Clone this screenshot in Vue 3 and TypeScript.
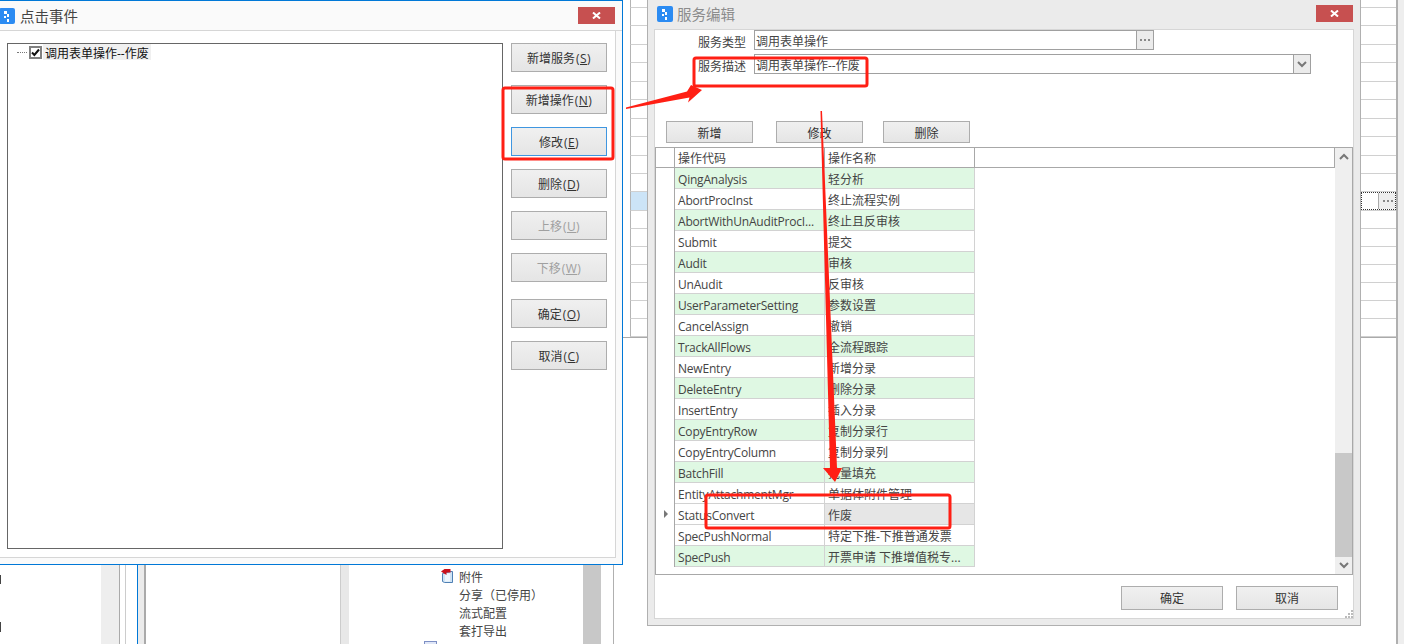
<template>
  <div class="desk">
    <!-- window behind: strips visible around the two dialogs -->
    <div class="back-strip strip-left">
      <div v-for="n in 19" :key="n" class="back-row" :class="{ 'back-sel': n === 12 }"></div>
    </div>
    <div class="back-strip strip-right">
      <div v-for="n in 19" :key="n" class="back-row">
        <div v-if="n === 12" class="back-cell"><span class="back-dots"></span></div>
      </div>
    </div>
    <div class="back-side"></div>

    <div class="back-bottom">
      <div class="tick-col"><i></i><i></i></div>
      <div class="bb-gray"></div>
      <div class="bb-lines"></div>
      <div class="bb-blue"></div>
      <div class="bb-white"></div>
      <div class="bb-split"></div>
      <div class="bb-tree">
        <div class="bb-item">
          <svg class="bb-icon" width="13" height="15" viewBox="0 0 13 15">
            <path d="M1.500 4.500 10 2.500h1.500v11H3.500l-2-1z" fill="#cfe3f5" stroke="#4f80b4" />
            <path d="M4 4.500h5v8H4z" fill="#eef6fd" />
            <path d="M3.500 0h6v3.500H5.500v2.500L0 2.500 3.500 0z" fill="#c8101c" />
          </svg>
          附件
        </div>
        <div class="bb-item">分享（已停用）</div>
        <div class="bb-item">流式配置</div>
        <div class="bb-item">套打导出</div>
        <svg class="bb-icon2" width="13" height="13" viewBox="0 0 13 13">
          <rect x="0.500" y="0.500" width="12" height="12" fill="#dfe6f7" stroke="#7d8fc4" />
        </svg>
      </div>
      <div class="bb-thumb"></div>
      <div class="bb-edge"></div>
    </div>

    <!-- 点击事件 -->
    <section class="win win-event">
      <header class="win-title">
        <svg class="app-icon icon-cut" width="16" height="16" viewBox="0 0 16 16">
          <rect width="16" height="16" rx="2" fill="#2b8bf2" />
          <path d="M5 3h3v3H5zM8 6h2v3H8zM5 8h2v2H5zM8 11h2v3H8z" fill="#fff" />
        </svg>
        <span class="title-text">点击事件</span>
        <button class="close-btn">
          <svg width="9" height="7" viewBox="0 0 9 7"><path d="M1 0.500l7 6M8 0.500l-7 6" stroke="#fff" stroke-width="2" /></svg>
        </button>
      </header>
      <div class="event-body">
        <div class="tree-box">
          <div class="tree-row">
            <span class="tree-dots"></span>
            <span class="check">
              <svg width="9" height="9" viewBox="0 0 9 9"><path d="M1 4.500 3.400 7 8 1.500" fill="none" stroke="#111" stroke-width="2" /></svg>
            </span>
            <span class="tree-label">调用表单操作--作废</span>
          </div>
        </div>
        <div class="side-btns">
          <button
            v-for="b in sideButtons"
            :key="b.text"
            class="btn side-btn"
            :class="{ focus: b.focus, off: b.off, later: b.later }"
          >{{ b.text }}<span class="accel">(<u>{{ b.key }}</u>)</span></button>
        </div>
      </div>
    </section>

    <!-- 服务编辑 -->
    <section class="win win-service">
      <header class="svc-title">
        <svg class="app-icon" width="16" height="16" viewBox="0 0 16 16">
          <rect width="16" height="16" rx="2" fill="#2b8bf2" />
          <path d="M5 3h3v3H5zM8 6h2v3H8zM5 8h2v2H5zM8 11h2v3H8z" fill="#fff" />
        </svg>
        <span class="title-text svc-name">服务编辑</span>
        <button class="close-btn">
          <svg width="9" height="7" viewBox="0 0 9 7"><path d="M1 0.500l7 6M8 0.500l-7 6" stroke="#fff" stroke-width="2" /></svg>
        </button>
      </header>
      <div class="svc-body">
        <div class="form-row">
          <label>服务类型</label>
          <div class="field f-type">
            <span class="f-text">调用表单操作</span>
            <span class="f-btn"><i class="dots"></i></span>
          </div>
        </div>
        <div class="form-row row-desc">
          <label>服务描述</label>
          <div class="field f-desc">
            <span class="f-text">调用表单操作--作废</span>
            <span class="f-btn">
              <svg width="10" height="7" viewBox="0 0 10 7"><path d="M1 1l4 4 4-4" fill="none" stroke="#777" stroke-width="2" /></svg>
            </span>
          </div>
        </div>
        <div class="op-btns">
          <button class="btn op-btn">新增</button>
          <button class="btn op-btn">修改</button>
          <button class="btn op-btn">删除</button>
        </div>
        <div class="grid-wrap">
          <div class="grid-main">
            <div class="g-row g-head">
              <span class="g-mark"></span>
              <span class="g-c1">操作代码</span>
              <span class="g-c2">操作名称</span>
              <span class="g-rest"></span>
            </div>
            <div
              v-for="r in rows"
              :key="r.code"
              class="g-row"
              :class="{ green: r.green, current: r.code === 'StatusConvert' }"
            >
              <span class="g-mark"><i v-if="r.code === 'StatusConvert'" class="cur-arrow"></i></span>
              <span class="g-c1 latin">{{ r.code }}</span>
              <span class="g-c2">{{ r.name }}</span>
            </div>
          </div>
          <div class="scroll">
            <span class="s-arrow">
              <svg width="10" height="7" viewBox="0 0 10 7"><path d="M1 6l4-4 4 4" fill="none" stroke="#777" stroke-width="2" /></svg>
            </span>
            <div class="s-track"><div class="s-thumb"></div></div>
            <span class="s-arrow">
              <svg width="10" height="7" viewBox="0 0 10 7"><path d="M1 1l4 4 4-4" fill="none" stroke="#777" stroke-width="2" /></svg>
            </span>
          </div>
        </div>
        <div class="svc-foot">
          <button class="btn foot-btn">确定</button>
          <button class="btn foot-btn">取消</button>
        </div>
        <span class="grip"></span>
      </div>
    </section>

    <!-- red annotations -->
    <svg class="marks" width="1404" height="644" viewBox="0 0 1404 644">
      <g fill="none" stroke="#ff1f14" stroke-width="3">
        <rect x="503" y="88" width="110" height="71" rx="2" />
        <rect x="694" y="58" width="173" height="28" rx="2" />
        <rect x="706" y="495" width="244" height="33" rx="2" />
      </g>
      <path d="M626 107.500 687 91.500 691 85 702 90 688 102.500 689.500 97.500 626 109z" fill="#ff1f14" />
      <path d="M820.500 111 822 111 837 468 842 468 835 482 823 468 830 468z" fill="#ff1f14" />
    </svg>
  </div>
</template>

<script setup lang="ts">
interface SideButton {
  text: string
  key: string
  focus?: boolean
  off?: boolean
  later?: boolean
}

interface OpRow {
  code: string
  name: string
  green?: boolean
}

const sideButtons: SideButton[] = [
  { text: '新增服务', key: 'S' },
  { text: '新增操作', key: 'N' },
  { text: '修改', key: 'E', focus: true },
  { text: '删除', key: 'D' },
  { text: '上移', key: 'U', off: true },
  { text: '下移', key: 'W', off: true },
  { text: '确定', key: 'O', later: true },
  { text: '取消', key: 'C' }
]

const rows: OpRow[] = [
  { code: 'QingAnalysis', name: '轻分析', green: true },
  { code: 'AbortProcInst', name: '终止流程实例' },
  { code: 'AbortWithUnAuditProcI...', name: '终止且反审核', green: true },
  { code: 'Submit', name: '提交' },
  { code: 'Audit', name: '审核', green: true },
  { code: 'UnAudit', name: '反审核' },
  { code: 'UserParameterSetting', name: '参数设置', green: true },
  { code: 'CancelAssign', name: '撤销' },
  { code: 'TrackAllFlows', name: '全流程跟踪', green: true },
  { code: 'NewEntry', name: '新增分录' },
  { code: 'DeleteEntry', name: '删除分录', green: true },
  { code: 'InsertEntry', name: '插入分录' },
  { code: 'CopyEntryRow', name: '复制分录行', green: true },
  { code: 'CopyEntryColumn', name: '复制分录列' },
  { code: 'BatchFill', name: '批量填充', green: true },
  { code: 'EntityAttachmentMgr', name: '单据体附件管理' },
  { code: 'StatusConvert', name: '作废' },
  { code: 'SpecPushNormal', name: '特定下推-下推普通发票' },
  { code: 'SpecPush', name: '开票申请 下推增值税专...', green: true }
]
</script>

<style>
html,
body {
  margin: 0;
  background: #fff;
  overflow: hidden;
}
</style>

<style scoped>
.desk {
  position: relative;
  width: 1404px;
  height: 644px;
  overflow: hidden;
  background: #fff;
  font-family: "Open Sans", "Noto Sans CJK SC", sans-serif;
  font-size: 12px;
  color: #444;
}

/* background window */
.back-strip {
  position: absolute;
  top: 0;
  height: 338px;
  box-sizing: border-box;
  border-bottom: 1px solid #aaa;
  overflow: hidden;
}
.strip-left {
  left: 623px;
  width: 24px;
  padding-left: 7px;
}
.strip-right {
  left: 1361px;
  width: 35px;
}
.strip-left .back-row {
  border-left: 1px solid #b4b4b4;
}
.back-row {
  height: 18.45px;
  box-sizing: border-box;
  border-bottom: 1px solid #d0d0d0;
}
.back-row:first-child {
  height: 8px;
}
.back-row:nth-child(n + 13) {
  height: 18.1px;
}
.back-sel {
  background: #cce4f7;
}
.back-cell {
  height: 100%;
  box-sizing: border-box;
  border: 1px dotted #333;
  position: relative;
}
.back-dots {
  position: absolute;
  right: 0;
  top: 0;
  bottom: 0;
  width: 17px;
  box-sizing: border-box;
  background: #eee;
  border-left: 1px solid #aaa;
}
.back-dots::after {
  content: '';
  position: absolute;
  left: 4px;
  top: 7px;
  width: 2px;
  height: 2px;
  background: #888;
  box-shadow: 4px 0 #888, 8px 0 #888;
}
.back-side {
  position: absolute;
  left: 1396px;
  top: 0;
  bottom: 0;
  width: 8px;
  box-sizing: border-box;
  border-left: 2px solid #b0b0b0;
  background: #eee;
}
.back-bottom {
  position: absolute;
  left: 0;
  top: 565px;
  width: 647px;
  height: 79px;
  display: flex;
}
.tick-col {
  width: 101px;
  flex: none;
  position: relative;
}
.tick-col i {
  position: absolute;
  left: 0;
  top: 10px;
  width: 1px;
  height: 9px;
  background: #444;
}
.tick-col i + i {
  top: 57px;
  height: 10px;
}
.bb-gray {
  width: 18px;
  flex: none;
  background: #eee;
}
.bb-lines {
  width: 18px;
  flex: none;
  box-sizing: border-box;
  border-left: 1px solid #aaa;
  background: linear-gradient(90deg, #fff 0 5px, #ccc 5px 6px, #fff 6px);
}
.bb-blue {
  width: 9px;
  flex: none;
  box-sizing: border-box;
  border-left: 1px solid #0078d7;
  border-right: 2px solid #aaa;
  background: #ebebeb;
}
.bb-white {
  width: 194px;
  flex: none;
}
.bb-split {
  width: 9px;
  flex: none;
  background: #e8e8e8;
  border-left: 1px solid #ccc;
  box-sizing: border-box;
}
.bb-tree {
  position: relative;
  width: 234px;
  flex: none;
  box-sizing: border-box;
  padding: 4px 0 0 110px;
}
.bb-item {
  height: 18px;
  line-height: 18px;
  white-space: nowrap;
}
.bb-icon {
  position: absolute;
  left: 92px;
  top: 4px;
}
.bb-icon2 {
  position: absolute;
  left: 75px;
  top: 76px;
}
.bb-thumb {
  width: 18px;
  flex: none;
  background: #c8c8c8;
}
.bb-edge {
  margin-left: 12px;
  width: 1px;
  flex: none;
  background: #b0b0b0;
}

/* dialogs */
.win {
  position: absolute;
  box-sizing: border-box;
  display: flex;
  flex-direction: column;
}
.win-event {
  left: -1px;
  top: 0;
  width: 624px;
  height: 565px;
  border: 1px solid #0078d7;
  background: #fafafa;
}
.win-title {
  height: 30px;
  flex: none;
  display: flex;
  align-items: center;
  box-sizing: border-box;
  padding: 0 7px 0 0;
  border-bottom: 1px solid #d6d6d6;
}
.app-icon {
  flex: none;
}
.icon-cut {
  margin-left: -1px;
}
.title-text {
  margin-left: 5px;
  font-size: 14.5px;
  color: #444;
}
.close-btn {
  margin-left: auto;
  width: 37px;
  height: 17px;
  padding: 0;
  border: 0;
  background: #c75050;
  display: flex;
  align-items: center;
  justify-content: center;
}
.event-body {
  flex: 1;
  display: flex;
  margin-right: 6px;
  margin-bottom: 6px;
  padding: 12px 0 8px 7px;
  box-sizing: border-box;
  background: #fff;
  border-right: 1px solid #d6d6d6;
  border-bottom: 1px solid #d6d6d6;
  min-height: 0;
}
.tree-box {
  width: 496px;
  box-sizing: border-box;
  border: 1px solid #666;
}
.tree-row {
  display: flex;
  align-items: center;
  height: 16px;
  padding-left: 9px;
  font-size: 12px;
  color: #111;
}
.tree-dots {
  width: 10px;
  margin-right: 2px;
  border-top: 1px dotted #777;
}
.check {
  width: 13px;
  height: 13px;
  flex: none;
  margin-top: 1px;
  box-sizing: border-box;
  border: 2px solid #808080;
  display: flex;
  align-items: center;
  justify-content: center;
}
.tree-label {
  margin-left: 1px;
  padding: 0 2px;
  height: 16px;
  background: #f0f0f0;
  line-height: 19px;
}
.side-btns {
  margin-left: 8px;
  width: 96px;
  display: flex;
  flex-direction: column;
  gap: 13px;
}
.btn {
  box-sizing: border-box;
  padding: 2px 0 0;
  border: 1px solid #adadad;
  background: linear-gradient(#f0f0f0, #e5e5e5);
  font-family: inherit;
  font-size: 12px;
  color: #333;
}
.accel {
  margin-left: 1px;
  letter-spacing: 0.4px;
}
.side-btn {
  height: 29px;
  flex: none;
  padding-top: 0;
}
.side-btn.focus {
  border-color: #3f96e0;
}
.side-btn.off {
  color: #a0a0a0;
}
.side-btn.later {
  margin-top: 4px;
}

.win-service {
  left: 647px;
  top: 0;
  width: 714px;
  height: 626px;
  border: 1px solid #b0b0b0;
  border-top: 0;
  background: #ebebeb;
}
.svc-title {
  height: 29px;
  flex: none;
  display: flex;
  align-items: center;
  padding: 0 7px 2px 9px;
  box-sizing: border-box;
}
.svc-name {
  color: #8c8c8c;
  margin-left: 4px;
}
.svc-body {
  position: relative;
  flex: 1;
  margin: 0 6px 6px;
  background: #fff;
  border: 1px solid #d6d6d6;
  display: flex;
  flex-direction: column;
  min-height: 0;
}
.form-row {
  display: flex;
  align-items: center;
  height: 20px;
}
.row-desc {
  margin-top: 4px;
}
.form-row label {
  width: 91px;
  flex: none;
  text-align: right;
  margin-right: 8px;
  padding-top: 4px;
}
.field {
  height: 20px;
  box-sizing: border-box;
  border: 1px solid #a0a0a0;
  display: flex;
  align-items: center;
  justify-content: space-between;
}
.f-type {
  width: 400px;
}
.f-desc {
  width: 557px;
}
.f-text {
  padding: 2px 0 0 1px;
}
.f-btn {
  width: 17px;
  height: 18px;
  box-sizing: border-box;
  border-left: 1px solid #a0a0a0;
  background: #ebebeb;
  display: flex;
  align-items: center;
  justify-content: center;
}
.dots {
  width: 2px;
  height: 2px;
  margin-right: 8px;
  background: #888;
  box-shadow: 4px 0 #888, 8px 0 #888;
}
.op-btns {
  display: flex;
  margin: 47px 0 0 11px;
}
.op-btn {
  width: 87px;
  height: 22px;
  margin-right: 23px;
}
.op-btn + .op-btn + .op-btn {
  margin-left: -3px;
}
.grid-wrap {
  display: flex;
  height: 426px;
  margin-top: 4px;
  border: 1px solid #a8a8a8;
  border-width: 1px 0 1px 1px;
  flex: none;
}
.grid-main {
  flex: 1;
  min-width: 0;
}
.g-row {
  display: flex;
  height: 21px;
  box-sizing: border-box;
}
.g-head {
  height: 20px;
  border-bottom: 1px solid #a8a8a8;
}
.g-mark {
  width: 19px;
  flex: none;
  box-sizing: border-box;
  border-right: 1px solid #a8a8a8;
  position: relative;
}
.g-c1,
.g-c2 {
  width: 150px;
  flex: none;
  box-sizing: border-box;
  padding: 3px 0 0 3px;
  line-height: 18px;
  border-right: 1px solid #d2d2d2;
  border-bottom: 1px solid #d2d2d2;
  white-space: nowrap;
  overflow: hidden;
}
.latin {
  letter-spacing: -0.2px;
}
.g-head .g-c1,
.g-head .g-c2 {
  padding-top: 2px;
  border-right-color: #a8a8a8;
  border-bottom: 0;
}
.g-rest {
  flex: 1;
  border-right: 1px solid #a8a8a8;
}
.green .g-c1,
.green .g-c2 {
  background: #dff8e3;
}
.current .g-c2 {
  background: #e6e6e6;
}
.cur-arrow {
  position: absolute;
  left: 8px;
  top: 6px;
  border-left: 4px solid #777;
  border-top: 4px solid transparent;
  border-bottom: 4px solid transparent;
}
.scroll {
  width: 18px;
  flex: none;
  background: #efefef;
  border-right: 1px solid #a8a8a8;
  box-sizing: border-box;
  display: flex;
  flex-direction: column;
}
.s-arrow {
  height: 17px;
  flex: none;
  display: flex;
  align-items: center;
  justify-content: center;
}
.s-track {
  flex: 1;
  position: relative;
}
.s-thumb {
  position: absolute;
  left: 0;
  right: 0;
  bottom: 0;
  height: 104px;
  background: #c8c8c8;
}
.svc-foot {
  display: flex;
  justify-content: flex-end;
  gap: 13px;
  padding: 11px 15px 0 0;
}
.foot-btn {
  width: 102px;
  height: 24px;
  padding-top: 0;
}
.grip {
  position: absolute;
  right: 0;
  bottom: 0;
  width: 2px;
  height: 2px;
  background: #bbb;
  box-shadow: -3px 0 #bbb, -6px 0 #bbb, 0 -3px #bbb, -3px -3px #bbb, 0 -6px #bbb;
}

.marks {
  position: absolute;
  left: 0;
  top: 0;
  pointer-events: none;
}
</style>
